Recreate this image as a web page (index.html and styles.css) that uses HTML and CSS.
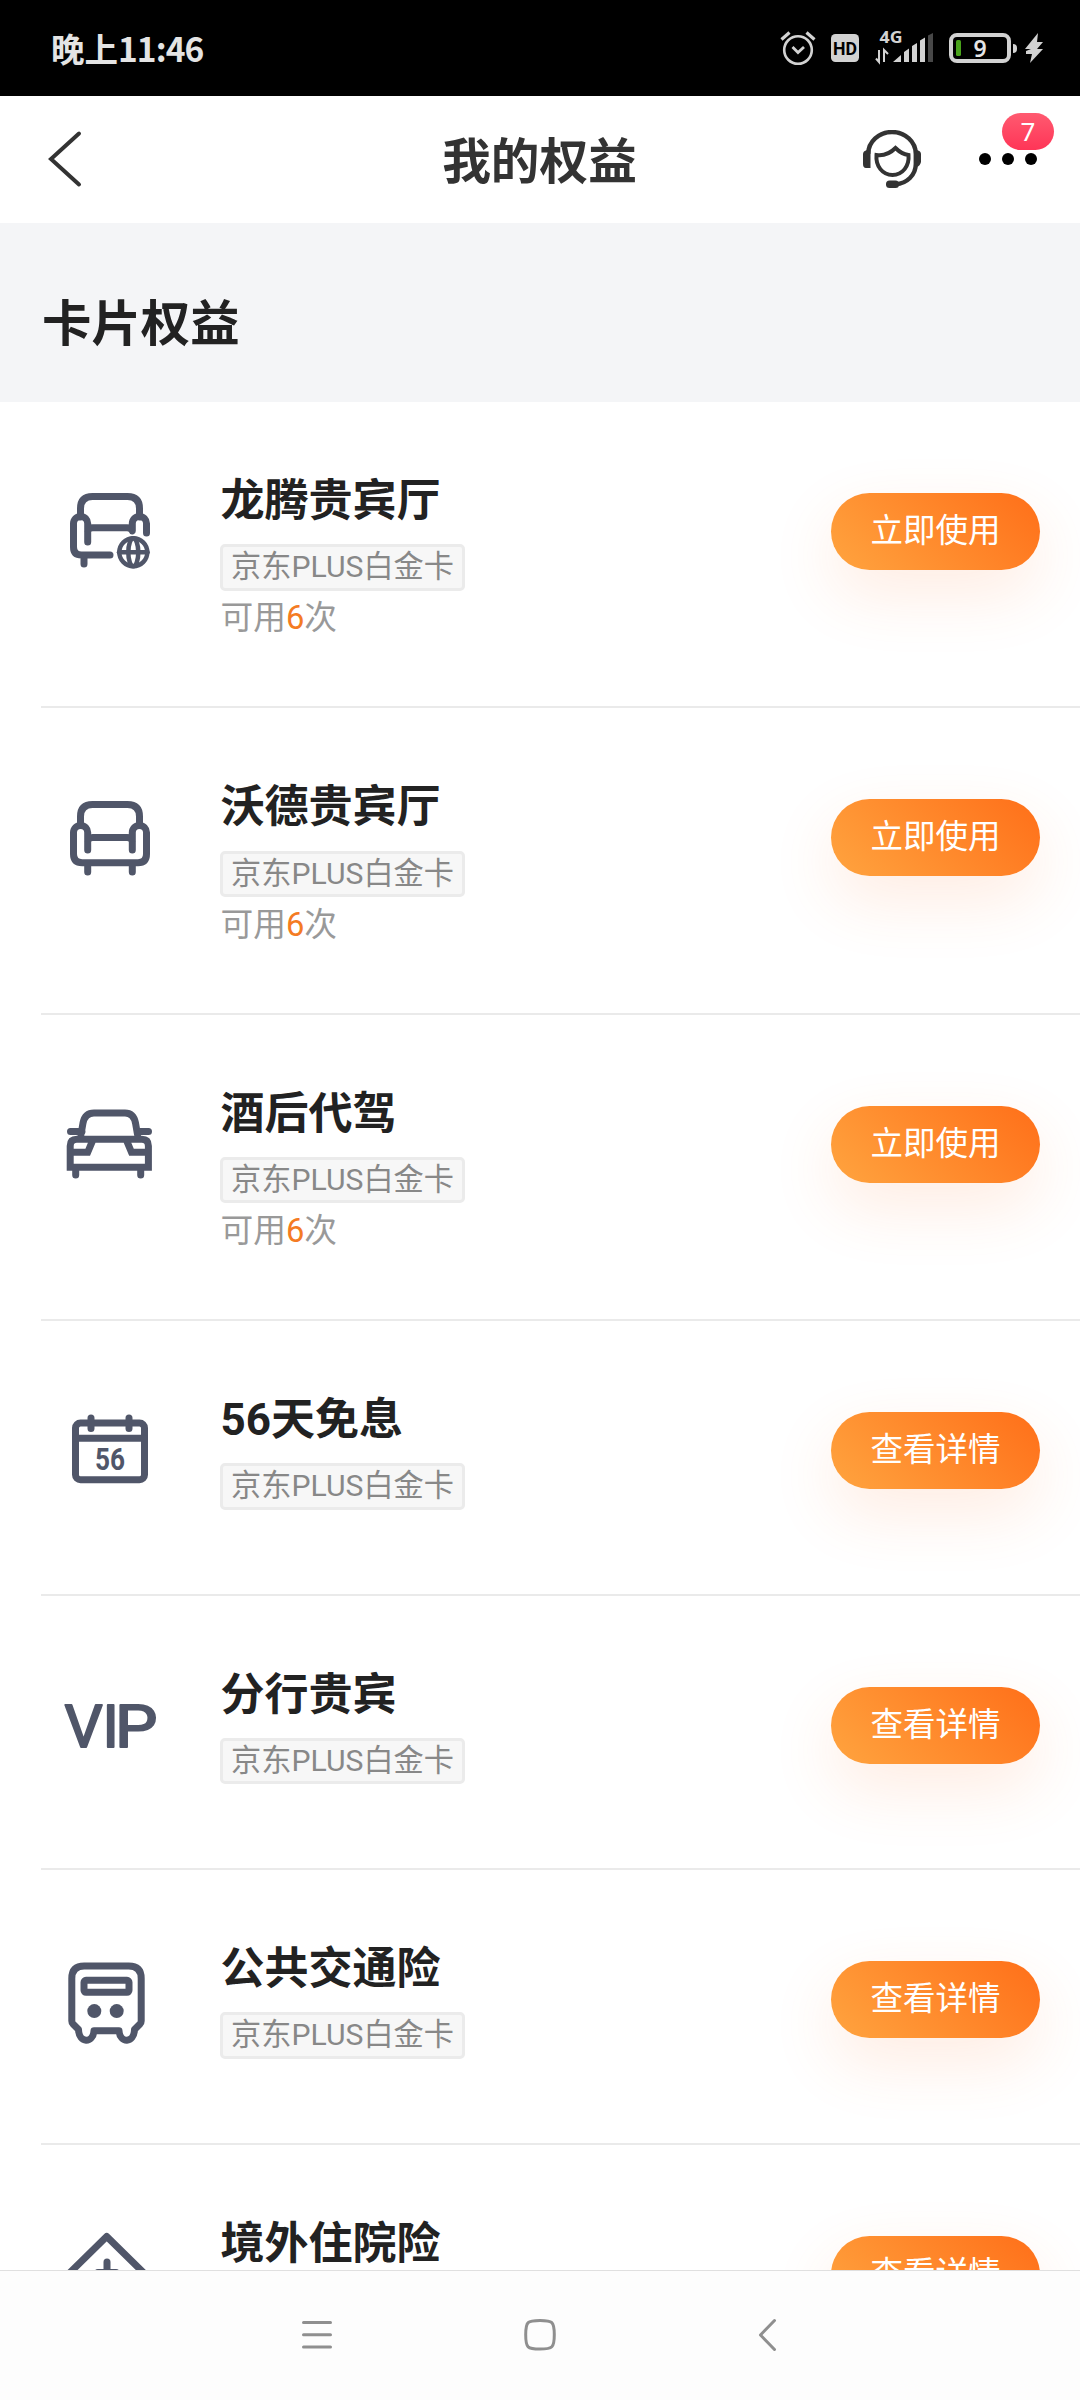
FILE: index.html
```html
<!DOCTYPE html>
<html lang="zh-CN">
<head>
<meta charset="utf-8">
<title>我的权益</title>
<link rel="stylesheet" href="styles.css">
</head>
<body>
<div class="screen">
  <div class="status">
    <div class="clock">晚上<span class="digits">11:46</span></div>
    <svg class="status-icons" width="300" height="96" viewBox="780 0 300 96">
      <g fill="none" stroke="#d2d2d2" stroke-width="2.6">
        <circle cx="798" cy="50" r="13.8"/>
        <path d="M792.5 47l5.5 5.5 6-5.5" stroke-width="2.8"/>
        <path d="M781.5 39.5l8-7M814.5 39.5l-8-7" stroke-width="3.2"/>
      </g>
      <rect x="831" y="34" width="28" height="28" rx="4.5" fill="#d2d2d2"/>
      <text class="hd" x="845" y="54.5" text-anchor="middle" textLength="24" lengthAdjust="spacingAndGlyphs">HD</text>
      <text class="g4" x="879.5" y="43" textLength="23" lengthAdjust="spacingAndGlyphs">4G</text>
      <path d="M879 50v12l-3-3.500M884 62V50l4 4" fill="none" stroke="#d2d2d2" stroke-width="2"/>
      <path d="M893 62l8-7v7zM904 52l5-3.500v13.500h-5zM912 46l5-3v19h-5zM920 40.500l5-3v24.500h-5z" fill="#d2d2d2"/>
      <path d="M928 35.500l5-2.500v29h-5z" fill="#484848"/>
      <rect x="951" y="35" width="58" height="26" rx="6" fill="none" stroke="#d2d2d2" stroke-width="4"/>
      <path d="M1013 44q4 0 4 4v1q0 4-4 4z" fill="#d2d2d2"/>
      <rect x="956" y="40" width="5" height="16" rx="1.500" fill="#49a31b"/>
      <text class="level" x="980" y="57" text-anchor="middle">9</text>
      <path d="M1038 33l-13 16h6l-5 2-0 3h6l-2 9 13-14h-6l6-7h-6z" fill="#d2d2d2"/>
    </svg>
  </div>

  <header class="header">
    <svg class="back" width="40" height="64" viewBox="0 0 40 64"><path d="M31 6.500L3 32l28 25.500" fill="none" stroke="#333" stroke-width="4" stroke-linecap="round"/></svg>
    <h1 class="header-title">我的权益</h1>
    <div class="actions">
      <svg width="58" height="58" viewBox="0 0 58 58">
        <g fill="none" stroke="#333" stroke-width="4.400">
          <path d="M5.200 24A23.800 22 0 0 1 52.800 24v10c0 11-9 19.500-20 20.200"/>
          <path d="M13.500 25c7 1 14-2 19-7 4 4 8 6.500 13 7 1 11-6 20-16 20s-17-9-16-20z" stroke-width="4"/>
        </g>
        <path d="M0 24q0-3 4-4h3.500v18H3q-3 0-3-4zM58 24q0-3-4-4h-3v17h3q3-1 4-5z" fill="#333"/>
        <rect x="23" y="50.500" width="13" height="7.500" rx="3.500" fill="#333"/>
      </svg>
      <div class="more">
        <i class="dot"></i><i class="dot"></i><i class="dot"></i>
        <span class="badge">7</span>
      </div>
    </div>
  </header>

  <h2 class="section">卡片权益</h2>

  <main class="list">
    <article class="row">
      <svg class="icon" viewBox="0 0 100 110">
        <path d="M20.500 35V26.500q0-12 12-12h35q12 0 12 12V35M27.700 60V41.500a7.100 7.100 0 0 0-14.200 0V65q0 8 8 8H50M24 73v9M27.700 49q1-3.300 5-3.300H67q4 0 5.300 3.300V41.500a7.100 7.100 0 0 1 14.200 0V51"/>
        <g class="thin"><circle cx="73.300" cy="70.300" r="14"/><ellipse cx="73.300" cy="70.300" rx="5" ry="14"/><path d="M59 70.300h28.600"/></g>
      </svg>
      <div class="info"><h3>龙腾贵宾厅</h3><span class="tag">京东PLUS白金卡</span><p class="usage">可用<b>6</b>次</p></div>
      <button class="cta">立即使用</button>
    </article>
    <article class="row">
      <svg class="icon" viewBox="0 0 100 110">
        <path d="M20.500 37V28.400q0-12 12-12h35q12 0 12 12V37M27.700 62V44.500a7.100 7.100 0 0 0-14.200 0V66q0 8.700 8.700 8.700H78q8.500 0 8.500-8.700V44.500a7.100 7.100 0 0 0-14.200 0V62M27.700 53q1-3.600 5-3.600H67q4 0 5.300 3.600M27.700 75v9M72.300 75v9"/>
      </svg>
      <div class="info"><h3>沃德贵宾厅</h3><span class="tag">京东PLUS白金卡</span><p class="usage">可用<b>6</b>次</p></div>
      <button class="cta">立即使用</button>
    </article>
    <article class="row">
      <svg class="icon" viewBox="0 0 100 110">
        <path d="M21 39.500l2-11.500q2-10 11-10h31q8.500 0 10.500 10l2 11.500M10.500 36.600H22M77 36.600h11.500M15.700 74v6M80.700 74v6"/>
        <path class="square" d="M10.200 72.300V51q0-6.700 6.700-6.700h64.800q6.700 0 6.700 6.700v21.300zM10 57.300h17.700l5-12M88.300 57.300H71.500l-5-12"/>
      </svg>
      <div class="info"><h3>酒后代驾</h3><span class="tag">京东PLUS白金卡</span><p class="usage">可用<b>6</b>次</p></div>
      <button class="cta">立即使用</button>
    </article>
    <article class="row short">
      <svg class="icon" viewBox="0 0 100 110">
        <rect x="15.500" y="22" width="69" height="56.700" rx="5"/>
        <path d="M16 37.300h68M31 17v10.500M69 17v10.500"/>
        <text class="days" x="35" y="68.500" textLength="30" lengthAdjust="spacingAndGlyphs">56</text>
      </svg>
      <div class="info"><h3>56天免息</h3><span class="tag">京东PLUS白金卡</span></div>
      <button class="cta">查看详情</button>
    </article>
    <article class="row short">
      <svg class="icon" viewBox="0 0 100 110">
        <text class="vip" y="71" x="4.500 42.500">VI</text>
        <text class="vip" transform="translate(55 71) scale(1.12 1)">P</text>
      </svg>
      <div class="info"><h3>分行贵宾</h3><span class="tag">京东PLUS白金卡</span></div>
      <button class="cta">查看详情</button>
    </article>
    <article class="row short">
      <svg class="icon" viewBox="0 0 100 110">
        <path d="M18.500 79.500l-5.500-5.500q-1.200-1-1.200-3V28.500q0-12.400 12.400-12.400h44.600q12.400 0 12.400 12.400V71q0 2-1.200 3l-5.500 5.500c-.5 14-14.500 14-15.500 1.300H34c-1 12.700-15 12.700-15.500-1.300z"/>
        <rect x="24" y="30.300" width="45" height="12" rx="2"/>
        <g class="solid"><circle cx="34.300" cy="61.100" r="7"/><circle cx="56.700" cy="61.100" r="7"/></g>
      </svg>
      <div class="info"><h3>公共交通险</h3><span class="tag">京东PLUS白金卡</span></div>
      <button class="cta">查看详情</button>
    </article>
    <article class="row short">
      <svg class="icon" viewBox="0 0 100 110">
        <path d="M7 50.500L46.700 11.500 86.400 50.500M47 37v20M38 47.500h18"/>
      </svg>
      <div class="info"><h3>境外住院险</h3></div>
      <button class="cta">查看详情</button>
    </article>
  </main>

  <nav class="nav">
    <svg width="32" height="36" viewBox="0 0 32 36"><path d="M2.500 5.500h27M2.500 17.700h27M2.500 29.900h27"/></svg>
    <svg width="36" height="36" viewBox="0 0 36 36"><path d="M18 3.400c12.500 0 14.300 1.300 14.300 14.300S30.500 32 18 32 3.700 31 3.700 17.700 5.500 3.400 18 3.400z"/></svg>
    <svg width="20" height="36" viewBox="0 0 20 36"><path d="M17.500 3.500L3.500 18l14 14.500"/></svg>
  </nav>
</div>
</body>
</html>
```
FILE: styles.css
```css
* { box-sizing: border-box; margin: 0; padding: 0; }

body {
  background: #fff;
  font-family: Roboto, "Noto Sans CJK SC", sans-serif;
  color: #222;
}

.screen {
  width: 1080px;
  height: 2400px;
  display: flex;
  flex-direction: column;
  overflow: hidden;
}

.status {
  flex: none;
  height: 96px;
  background: #000;
  display: flex;
  justify-content: space-between;
  align-items: center;
  padding-left: 51px;
}

.clock {
  font: 700 33.500px/48px "Noto Sans CJK SC", sans-serif;
  color: #e4e4e4;
  padding-bottom: 1px;
}

.digits { letter-spacing: -0.9px; }
.status-icons { display: block; }
.hd { font: 700 18px Roboto, sans-serif; fill: #000; }
.g4 { font: 700 16px "Noto Sans", sans-serif; fill: #d2d2d2; }
.level { font: 600 23px "Noto Sans", sans-serif; fill: #e6e6e6; }

.header {
  flex: none;
  height: 127px;
  display: grid;
  grid-template-columns: 1fr auto 1fr;
  align-items: center;
  padding: 0 43px 2px 48px;
  background: #fff;
}

.header-title {
  font-size: 48.700px;
  line-height: 70px;
  font-weight: 700;
  color: #333;
  margin-top: 9px;
  padding-right: 6px;
}

.actions {
  display: flex;
  justify-content: flex-end;
  align-items: center;
  gap: 58px;
}

.more {
  position: relative;
  display: flex;
  justify-content: space-between;
  width: 58px;
}

.dot { width: 12px; height: 12px; border-radius: 50%; background: #000; }

.badge {
  position: absolute;
  left: 23px;
  top: -40px;
  width: 52px;
  height: 37px;
  border-radius: 19px;
  background: linear-gradient(#ff5a70, #ff3557);
  color: #fff;
  font: 400 26px/36px "Noto Sans", sans-serif;
  text-align: center;
}

.section {
  flex: none;
  height: 179px;
  padding: 0 42px;
  background: #f4f5f7;
  font-size: 49.400px;
  font-weight: 700;
  line-height: 203px;
}

.list {
  flex: 1;
  min-height: 0;
  overflow: hidden;
  padding-left: 41px;
}

.row {
  height: 306.300px;
  display: flex;
  align-items: flex-start;
  border-bottom: 2px solid #eaeaea;
  padding-right: 40px;
}

.row.short { height: 274.650px; }

.icon {
  flex: none;
  width: 100px;
  height: 110px;
  margin: 80px 60px 0 19px;
  fill: none;
  stroke: #505669;
  stroke-width: 7;
  stroke-linecap: round;
  stroke-linejoin: round;
}

.thin { stroke-width: 4.500; }
.square { stroke-linejoin: miter; stroke-linecap: butt; }
.solid { fill: #505669; stroke: none; }
.days { font: 700 32px Roboto, sans-serif; fill: #505669; stroke: none; }
.vip { font: 400 60px Roboto, sans-serif; fill: #505669; stroke-width: 2; }

.info {
  flex: 1;
  display: flex;
  flex-direction: column;
  align-items: flex-start;
  padding-top: 67px;
}

.info h3 {
  font-size: 44px;
  line-height: 64px;
  font-weight: 700;
  padding-left: 0.500px;
}

.tag {
  margin-top: 11.300px;
  height: 46.500px;
  padding: 0 8px;
  border: 3px solid #ebebeb;
  border-radius: 5px;
  background: #f7f7f7;
  color: #888;
  font-size: 30.200px;
  line-height: 40px;
  white-space: nowrap;
}

.usage {
  margin-top: 3.700px;
  padding-left: 0.500px;
  font-size: 32.700px;
  line-height: 48px;
  color: #999;
}

.usage b { font-weight: 400; color: #f47b23; }

.cta {
  flex: none;
  margin-top: 91px;
  width: 209px;
  height: 77px;
  border: 0;
  border-radius: 39px;
  background: linear-gradient(45deg, #ffa43f, #ff6f19);
  box-shadow: 0 24px 64px rgba(255, 120, 50, 0.14);
  color: #fff;
  font: 400 32.500px/75px Roboto, "Noto Sans CJK SC", sans-serif;
  text-align: center;
}

.nav {
  flex: none;
  height: 130px;
  border-top: 1px solid #e0e0e0;
  background: #fdfdfd;
  display: flex;
  padding: 46px 0 0 301px;
}

.nav svg {
  fill: none;
  stroke: #8f8f8f;
  stroke-width: 3;
  stroke-linecap: round;
  stroke-linejoin: round;
}

.nav svg:nth-child(2) { margin: 0 199px 0 189px; }
```
